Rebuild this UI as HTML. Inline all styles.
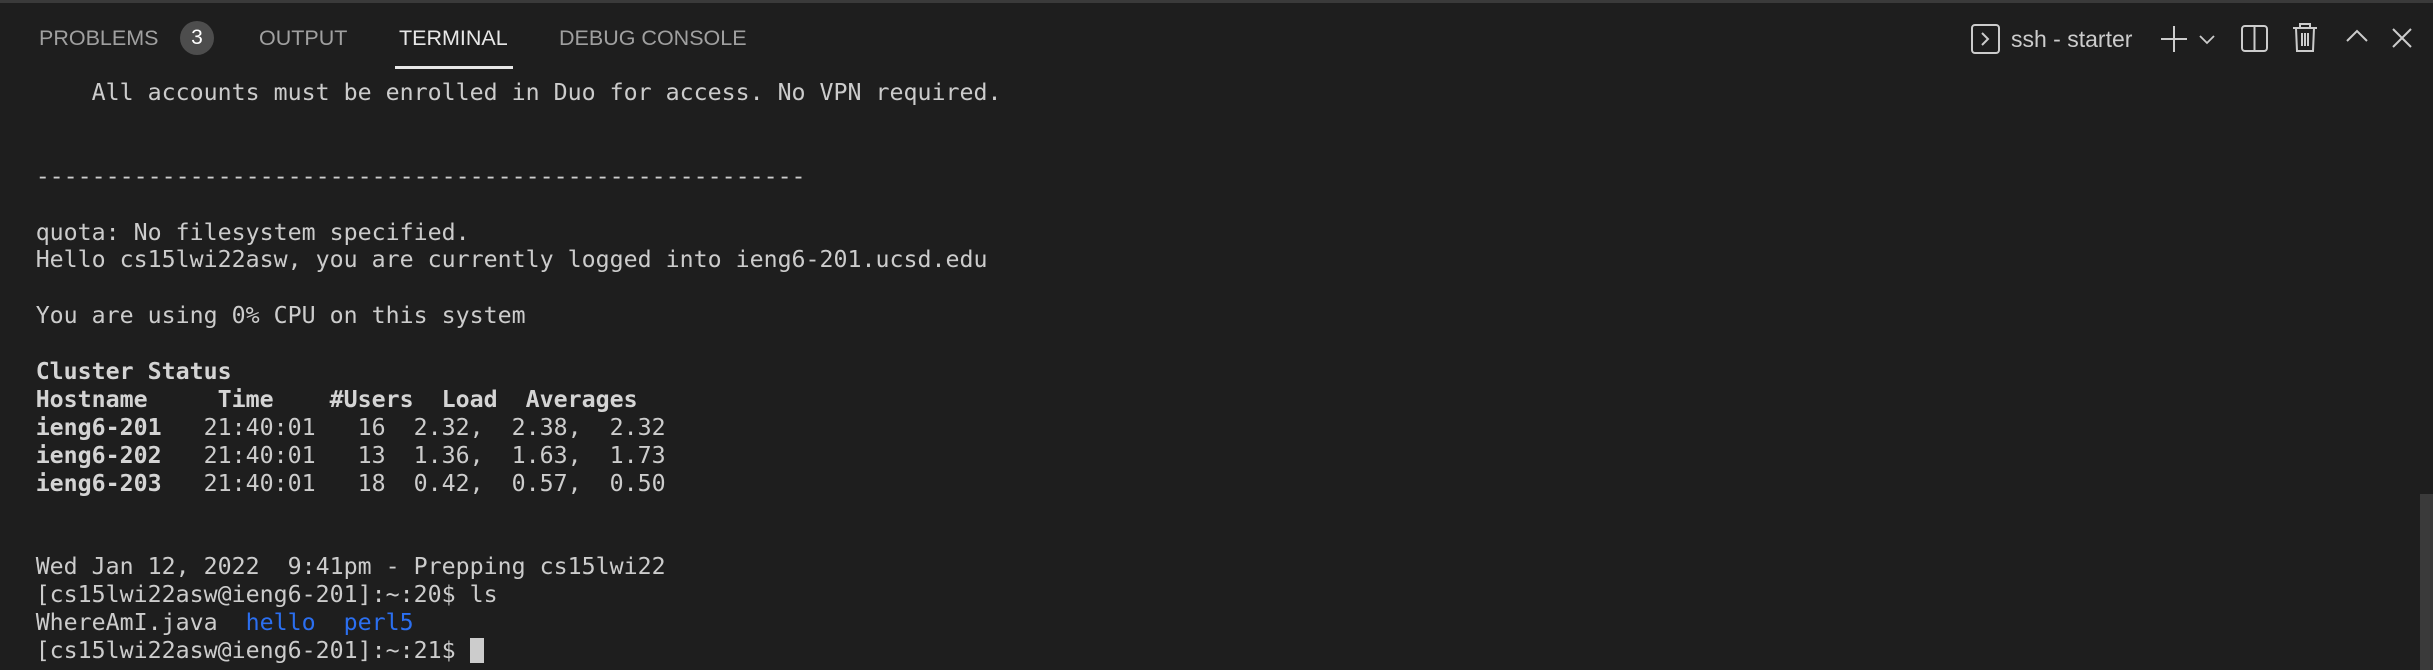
<!DOCTYPE html>
<html><head><meta charset="utf-8"><style>
html,body{margin:0;padding:0;background:#1e1e1e;width:2433px;height:670px;overflow:hidden;}
body{position:relative;}
.topb{position:absolute;left:0;top:0;width:2433px;height:3px;background:#3a3a3a;}
.tab{position:absolute;top:26px;font-family:"Liberation Sans",sans-serif;font-size:21.5px;color:#a0a0a0;line-height:24px;white-space:nowrap;}
.badge{position:absolute;left:180px;top:21px;width:34px;height:34px;border-radius:17px;background:#4d4d4d;color:#fff;font-family:"Liberation Sans",sans-serif;font-size:21px;line-height:34px;text-align:center;}
.ul{position:absolute;left:395px;top:66px;width:118px;height:3px;background:#e7e7e7;}
.term{position:absolute;left:35.7px;top:79px;font-family:"DejaVu Sans Mono",monospace;font-size:23.25px;line-height:27.9px;color:#cccccc;white-space:pre;}
b{font-weight:bold;color:#d4d4d4}
.bl{color:#2b6ff0}
.cur{display:inline-block;width:14px;height:25px;background:#cccccc;vertical-align:-5px;}
.scroll{position:absolute;left:2420px;top:494px;width:13px;height:176px;background:#3a3a3a;}
.ssh{position:absolute;left:2011px;top:25px;font-family:"Liberation Sans",sans-serif;font-size:23px;color:#cccccc;line-height:28px;}
svg{position:absolute;}
</style></head><body>
<div class="topb"></div>
<div class="tab" style="left:39px">PROBLEMS</div>
<div class="badge">3</div>
<div class="tab" style="left:259px">OUTPUT</div>
<div class="tab" style="left:399px;color:#e7e7e7">TERMINAL</div>
<div class="tab" style="left:559px">DEBUG CONSOLE</div>
<div class="ul"></div>

<svg style="left:1970px;top:23px" width="32" height="32" viewBox="0 0 32 32"><rect x="2" y="2" width="27" height="28" rx="3" fill="none" stroke="#cccccc" stroke-width="2"/><path d="M12 10 L18 16 L12 22" fill="none" stroke="#cccccc" stroke-width="2"/></svg>
<div class="ssh">ssh - starter</div>
<svg style="left:2159px;top:24px" width="30" height="30" viewBox="0 0 30 30"><path d="M15 2 V28 M2 15 H28" stroke="#cccccc" stroke-width="2"/></svg>
<svg style="left:2198px;top:32px" width="18" height="14" viewBox="0 0 18 14"><path d="M2 4 L9 11 L16 4" fill="none" stroke="#cccccc" stroke-width="1.8"/></svg>
<svg style="left:2240px;top:24px" width="30" height="30" viewBox="0 0 30 30"><rect x="2" y="2" width="25" height="25" rx="3" fill="none" stroke="#cccccc" stroke-width="2"/><path d="M14.5 2 V27" stroke="#cccccc" stroke-width="2"/></svg>
<svg style="left:2291px;top:22px" width="28" height="32" viewBox="0 0 28 32"><path d="M2 6 H26 M9 6 V2 H19 V6 M5 6 L6 29 H22 L23 6 M11 11 V24 M14 11 V24 M17 11 V24" fill="none" stroke="#cccccc" stroke-width="2"/></svg>
<svg style="left:2345px;top:28px" width="24" height="16" viewBox="0 0 24 16"><path d="M2 13 L12 3 L22 13" fill="none" stroke="#cccccc" stroke-width="2"/></svg>
<svg style="left:2390px;top:26px" width="24" height="24" viewBox="0 0 24 24"><path d="M3 3 L21 21 M21 3 L3 21" stroke="#cccccc" stroke-width="2"/></svg>

<div class="term">    All accounts must be enrolled in Duo for access. No VPN required.


-------------------------------------------------------

quota: No filesystem specified.
Hello cs15lwi22asw, you are currently logged into ieng6-201.ucsd.edu

You are using 0% CPU on this system

<b>Cluster Status</b>
<b>Hostname     Time    #Users  Load  Averages</b>
<b>ieng6-201</b>   21:40:01   16  2.32,  2.38,  2.32
<b>ieng6-202</b>   21:40:01   13  1.36,  1.63,  1.73
<b>ieng6-203</b>   21:40:01   18  0.42,  0.57,  0.50


Wed Jan 12, 2022  9:41pm - Prepping cs15lwi22
[cs15lwi22asw@ieng6-201]:~:20$ ls
WhereAmI.java  <span class="bl">hello</span>  <span class="bl">perl5</span>
[cs15lwi22asw@ieng6-201]:~:21$ <span class="cur"></span></div>
<div class="scroll"></div>
</body></html>
